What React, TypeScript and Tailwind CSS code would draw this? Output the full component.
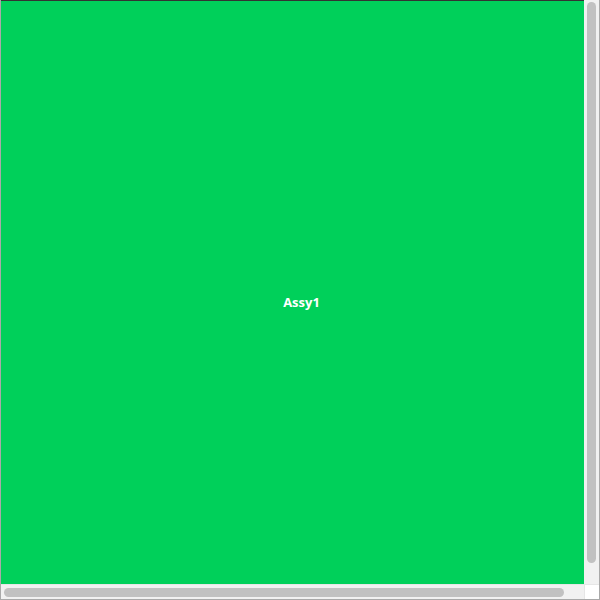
export default function App() {
  return (
    <div className="flex h-[600px] w-[600px] flex-col border-x border-b border-[#a9a9a9] bg-[#f1f1f1] font-['Open_Sans',sans-serif]">
      <div className="flex min-h-0 flex-1">
        <div className="flex flex-1 items-center justify-center border-t border-[#333] bg-[#00d05a] pt-[18px] pl-[18px]">
          <span className="mt-[2px] text-[13px] font-bold text-white">Assy1</span>
        </div>
        {/* vertical scrollbar */}
        <div className="flex w-[15px] flex-col bg-[#f1f1f1] px-[3px] pt-[2px] pb-[21px]">
          <div className="w-[9px] flex-1 rounded-full bg-[#c1c1c1]" />
        </div>
      </div>
      <div className="flex h-[15px] border-t border-[#e6e6e6]">
        {/* horizontal scrollbar */}
        <div className="flex flex-1 items-center bg-[#f1f1f1] pl-[3px] pr-[20px]">
          <div className="h-[9px] flex-1 rounded-full bg-[#c1c1c1]" />
        </div>
        <div className="w-[15px] border-l border-[#e6e6e6] bg-white" />
      </div>
    </div>
  );
}
